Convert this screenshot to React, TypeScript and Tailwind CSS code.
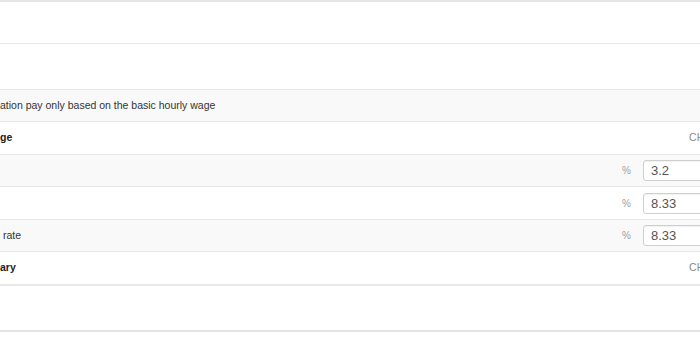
import React from 'react';

const font = { fontFamily: '"Liberation Sans", Arial, sans-serif' };

function PercentInput({ value }: { value: string }) {
    return (
        <div className="flex items-center">
            <span className="text-[10px] text-[#a0a0a0] w-[8px]">%</span>
            <input
                readOnly
                value={value}
                className="ml-[13px] w-[100px] h-[21px] border border-[#cfcfcf] rounded-[3px] bg-white pl-[7px] text-[13px] text-[#555] outline-none shadow-[inset_0_1px_1px_rgba(0,0,0,0.06)]"
            />
        </div>
    );
}

function ChangeLink() {
    return <span className="w-[71px] text-[10.5px] text-[#8a8a8a] tracking-[0.2px]">CHANGE</span>;
}

export default function App() {
    return (
        <div className="w-[700px] h-[349px] overflow-hidden bg-white" style={font}>
            <div className="w-[760px] border-t-2 border-[#e6e6e6]">
                {/* empty blocks */}
                <div className="h-[42px] border-b border-[#e8e8e8]" />
                <div className="h-[46px] border-b border-[#e8e8e8]" />

                {/* option row */}
                <div className="h-[32px] flex items-center bg-[#f9f9f9] border-b border-[#e8e8e8]">
                    <span className="text-[10.5px] text-[#333]">ation pay only based on the basic hourly wage</span>
                </div>

                {/* hourly wage group */}
                <div className="h-[33px] flex items-center justify-between border-b border-[#e8e8e8]">
                    <span className="text-[10.5px] font-bold text-[#222]">ge</span>
                    <ChangeLink />
                </div>
                <div className="h-[32px] flex items-center justify-between bg-[#f9f9f9] border-b border-[#e8e8e8] pr-[17px]">
                    <span />
                    <PercentInput value="3.2" />
                </div>
                <div className="h-[33px] flex items-center justify-between border-b border-[#e8e8e8] pr-[17px]">
                    <span />
                    <PercentInput value="8.33" />
                </div>
                <div className="h-[32px] flex items-center justify-between bg-[#f9f9f9] border-b border-[#e8e8e8] pr-[17px]">
                    <span className="pl-[3px] text-[10.5px] text-[#333]">rate</span>
                    <PercentInput value="8.33" />
                </div>

                {/* salary group */}
                <div className="h-[34px] flex items-center justify-between border-b-2 border-[#e8e8e8]">
                    <span className="text-[10.5px] font-bold text-[#222]">ary</span>
                    <ChangeLink />
                </div>
                <div className="h-[46px] border-b-2 border-[#e3e3e3]" />
            </div>
        </div>
    );
}
